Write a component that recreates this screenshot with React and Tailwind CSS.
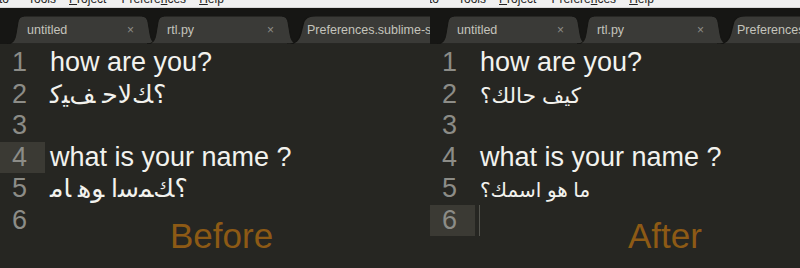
const menu = [
  { pre: "", key: "", post: "Tools", ml: "ml-[19px]" },
  { pre: "", key: "P", post: "roject", ml: "ml-[13px]" },
  { pre: "Prefere", key: "n", post: "ces", ml: "ml-[15px]" },
  { pre: "", key: "H", post: "elp", ml: "ml-[13px]" },
];
const tabs = [
  { title: "untitled", w: "w-[152px]", close: true },
  { title: "rtl.py", w: "w-[152px]", close: true },
  { title: "Preferences.sublime-settings", w: "w-[230px]", close: false },
];

const Tab = ({ title, w, close, first }) => (
  <div className={`relative flex h-[28px] shrink-0 items-center ${w} ${first ? "" : "-ml-[12px]"}`}>
    <svg className="absolute inset-0 h-full w-full" viewBox="0 0 152 28" preserveAspectRatio="none">
      <path
        d="M0 28 C6 28 8 24 9 18 L11 6 C12 2 14 0 19 0 L133 0 C138 0 140 2 141 6 L143 18 C144 24 146 28 152 28 Z"
        fill="#3a3a37"
        stroke="#141412"
        strokeWidth="1"
      />
    </svg>
    <span className="relative ml-[20px] w-[100px] shrink-0 whitespace-nowrap text-[12.5px] text-[#c4c4bc]">
      {title}
    </span>
    {close && <span className="relative text-[12px] text-[#8e8e88]">×</span>}
  </div>
);

const Panel = ({ lines, active, cursor, label, labelLeft, width }) => (
  <div className={`flex h-[268px] flex-col overflow-hidden ${width}`}>
    {/* menu bar, cut at the top */}
    <div className="h-[8px] overflow-hidden border-b border-[#d8d8d8] bg-[#f0f0f0]">
      <div className="-mt-[7px] flex text-[12px] leading-[12px] text-[#222]">
        <span className="-ml-px">to</span>
        {menu.map((m) => (
          <span key={m.post} className={m.ml}>
            {m.pre}
            <span className="underline">{m.key}</span>
            {m.post}
          </span>
        ))}
      </div>
    </div>

    {/* tab bar */}
    <div className="flex h-[36px] items-end overflow-hidden bg-[#161614] pl-[7px]">
      {tabs.map((t, i) => (
        <Tab key={t.title} {...t} first={i === 0} />
      ))}
    </div>

    {/* editor */}
    <div className="relative flex-1 bg-[#262622] pt-[3px] text-[27px] leading-[31.5px]">
      {lines.map((line, i) => (
        <div key={i} className="flex h-[31.5px]">
          <div
            className={`w-[45px] shrink-0 pr-[18px] text-right text-[#8c8c87] ${
              active === i + 1 ? "bg-[#3b3a34]" : ""
            }`}
          >
            {i + 1}
          </div>
          {cursor === i + 1 ? (
            <div className="ml-[4px] w-px bg-[#55554f]" />
          ) : (
            <div className="ml-[5px] whitespace-nowrap text-[#f2f2ee]">{line}</div>
          )}
        </div>
      ))}
      <div className={`absolute top-[174px] text-[35px] leading-none text-[#8d5a15] ${labelLeft}`}>
        {label}
      </div>
    </div>
  </div>
);

export default function App() {
  return (
    <div
      className="flex h-[268px] w-[800px] overflow-hidden bg-[#161614]"
      style={{ fontFamily: '"Liberation Sans", "DejaVu Sans", sans-serif' }}
    >
      <Panel
        width="w-[430px] shrink-0"
        active={4}
        label="Before"
        labelLeft="left-[170px]"
        lines={[
          "how are you?",
          <bdo key="a" dir="ltr" className="text-[25px]">
            {"\uFEDB\uFEF4\uFED2 \uFEA3\uFE8E\uFEDF\uFEDA\u061F"}
          </bdo>,
          "",
          "what is your name ?",
          <bdo key="b" dir="ltr" className="text-[25px]">
            {"\uFEE3\uFE8E \uFEEB\uFEEE \uFE8D\uFEB3\uFEE4\uFEDA\u061F"}
          </bdo>,
          "",
        ]}
      />
      <Panel
        width="flex-1"
        active={6}
        cursor={6}
        label="After"
        labelLeft="left-[198px]"
        lines={[
          "how are you?",
          <span key="a" className="text-[21.5px]">كيف حالك؟</span>,
          "",
          "what is your name ?",
          <span key="b" className="text-[20px]">ما هو اسمك؟</span>,
          "",
        ]}
      />
    </div>
  );
}
